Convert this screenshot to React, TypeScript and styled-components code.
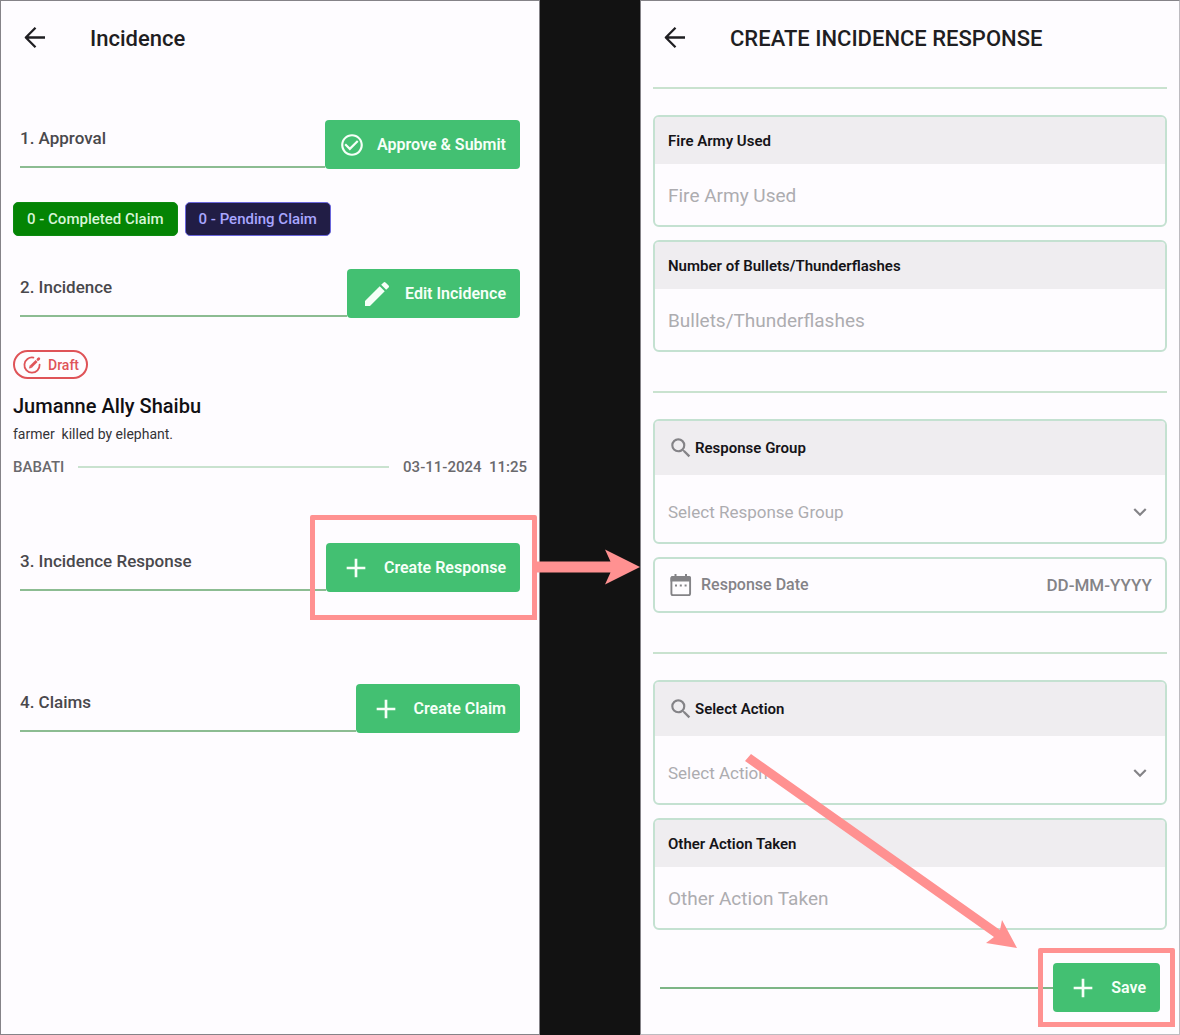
import React from "react";
import styled, { createGlobalStyle } from "styled-components";
import {
  MdAdd,
  MdCheckCircleOutline,
  MdEdit,
  MdExpandMore,
  MdSearch,
} from "react-icons/md";

const color = {
  surface: "#fefcff",
  backdrop: "#121212",
  frame: "#858388",
  green: "#43c072",
  rule: "#8cbc92",
  softRule: "#c9e2cf",
  fieldBorder: "#c4e1d1",
  fieldHead: "#efedf0",
  ink: "#1f1e22",
  label: "#49484c",
  muted: "#6a696d",
  faint: "#848387",
  placeholder: "#adacb0",
  red: "#df5358",
  marker: "#ff9191",
};

const GlobalStyle = createGlobalStyle`
  *, *::before, *::after { box-sizing: border-box; }
  body {
    margin: 0;
    background: ${color.backdrop};
    font-family: Roboto, "Liberation Sans", sans-serif;
  }
  button, input, select { font-family: inherit; }
`;

const Page = styled.div`
  display: grid;
  grid-template-columns: minmax(0, 1fr) 100px minmax(0, 1fr);
  min-height: 100vh;
`;

const Screen = styled.main`
  display: flex;
  flex-direction: column;
  background: ${color.surface};
  border: 1px solid ${color.frame};
`;

const LeftScreen = styled(Screen)`
  grid-column: 1;
`;

const RightScreen = styled(Screen)`
  grid-column: 3;
  border-right-color: #bdbbc0;
  border-bottom-color: #bdbbc0;
`;

const AppBar = styled.header`
  display: flex;
  align-items: center;
  gap: 40px;
  height: 74px;
  padding: 0 19px;
`;

const BackButton = styled.button`
  display: flex;
  padding: 0;
  border: 0;
  background: none;
  color: ${color.ink};
`;

const Title = styled.h1`
  margin: 0;
  padding-top: 2px;
  font-size: 22px;
  line-height: 28px;
  font-weight: 500;
  color: ${color.ink};
`;

const Step = styled.section`
  display: flex;
  height: 49px;
  margin: 0 19px;

  & + & {
    margin-top: 92px;
  }
`;

const StepLabel = styled.h2`
  flex: 1;
  margin: 0 0 1px;
  padding-top: 8px;
  border-bottom: 2px solid ${color.rule};
  font-size: 17px;
  line-height: 20px;
  font-weight: 500;
  color: ${color.label};
`;

const ActionButton = styled.button`
  position: relative;
  display: flex;
  align-items: center;
  gap: 12px;
  height: 49px;
  padding: 0 14px;
  border: 0;
  border-radius: 4px;
  background: ${color.green};
  color: #f6fff8;
  font-size: 16px;
  line-height: 20px;
  font-weight: 600;
  white-space: nowrap;
`;

const Marker = styled.span<{ $inset: string }>`
  position: absolute;
  inset: ${(p) => p.$inset};
  border: 5px solid ${color.marker};
  border-radius: 2px 2px 0 0;
  pointer-events: none;
`;

const MarkerArrow = styled.svg<{ $left: string; $bottom: string }>`
  position: absolute;
  left: ${(p) => p.$left};
  bottom: ${(p) => p.$bottom};
  fill: ${color.marker};
  pointer-events: none;
  z-index: 1;
`;

const Steps = styled.div`
  display: flex;
  flex-direction: column;
  padding-top: 45px;
`;

const Chips = styled.div`
  display: flex;
  gap: 7px;
  padding: 33px 12px;
`;

const Chip = styled.span<{ $tone: "done" | "pending" }>`
  padding: 6px 13px;
  border: 1px solid ${(p) => (p.$tone === "done" ? "#0c8a10" : "#6a66dc")};
  border-radius: 5px;
  background: ${(p) => (p.$tone === "done" ? "#048404" : "#211d45")};
  color: ${(p) => (p.$tone === "done" ? "#d8f5d8" : "#a9a6ff")};
  font-size: 15px;
  line-height: 20px;
  font-weight: 500;
`;

const Incident = styled.article`
  display: flex;
  flex-direction: column;
  align-items: flex-start;
  padding: 32px 12px 66px;
`;

const DraftBadge = styled.span`
  display: flex;
  align-items: center;
  gap: 6px;
  height: 29px;
  padding: 0 7px;
  border: 2px solid ${color.red};
  border-radius: 15px;
  color: ${color.red};
  font-size: 14px;
  line-height: 20px;
  font-weight: 500;
`;

const Person = styled.h3`
  margin: 13px 0 0;
  font-size: 20px;
  line-height: 28px;
  font-weight: 500;
  color: #111014;
`;

const Summary = styled.p`
  margin: 4px 0 0;
  font-size: 14px;
  line-height: 20px;
  color: #343337;
  white-space: pre-wrap;
`;

const Meta = styled.div`
  display: flex;
  align-items: center;
  gap: 14px;
  width: 100%;
  margin-top: 13px;
  font-size: 15px;
  line-height: 20px;
  font-weight: 500;
  color: ${color.muted};
  white-space: pre;
`;

const MetaRule = styled.hr`
  flex: 1;
  margin: 0;
  border: 0;
  border-top: 2px solid ${color.softRule};
`;

const Form = styled.form`
  display: flex;
  flex-direction: column;
  padding: 12px 12px 0;
`;

const Group = styled.section`
  display: flex;
  flex-direction: column;
  gap: 13px;
  padding: 26px 0 39px;
  border-top: 2px solid ${color.softRule};

  &:last-of-type {
    padding-bottom: 33px;
  }
`;

const Field = styled.div`
  display: flex;
  flex-direction: column;
  overflow: hidden;
  border: 2px solid ${color.fieldBorder};
  border-radius: 6px;
`;

const FieldLabel = styled.label<{ $tall?: boolean }>`
  display: flex;
  align-items: center;
  gap: 1px;
  height: ${(p) => (p.$tall ? 54 : 47)}px;
  padding: 0 13px;
  background: ${color.fieldHead};
  font-size: 15px;
  line-height: 20px;
  font-weight: 600;
  color: #151418;

  svg {
    color: ${color.faint};
  }
`;

const TextInput = styled.input`
  height: 61px;
  padding: 2px 13px 0;
  border: 0;
  outline: 0;
  background: transparent;
  font-size: 19px;
  color: ${color.ink};

  &::placeholder {
    color: ${color.placeholder};
    opacity: 1;
  }
`;

const SelectBox = styled.div`
  display: grid;
  align-items: center;
  height: 67px;
  padding-top: 6px;

  > * {
    grid-area: 1 / 1;
  }

  svg {
    justify-self: end;
    margin-right: 12px;
    color: ${color.faint};
    pointer-events: none;
  }
`;

const Select = styled.select`
  appearance: none;
  width: 100%;
  height: 60px;
  padding: 0 13px;
  border: 0;
  outline: 0;
  background: transparent;
  font-size: 17px;
  color: ${color.placeholder};
`;

const DateField = styled.div`
  display: flex;
  align-items: center;
  gap: 7px;
  height: 56px;
  padding: 0 13px;
  border: 2px solid ${color.fieldBorder};
  border-radius: 6px;
  color: ${color.faint};
`;

const DateLabel = styled.label`
  font-size: 16px;
  line-height: 20px;
  font-weight: 500;
`;

const DateInput = styled.input`
  flex: 1;
  min-width: 0;
  padding: 0;
  border: 0;
  outline: 0;
  background: transparent;
  text-align: right;
  font-size: 17px;
  font-weight: 500;
  color: ${color.faint};

  &::placeholder {
    color: ${color.faint};
    opacity: 1;
  }
`;

const SaveRow = styled.div`
  display: flex;
  align-items: center;
  padding: 0 7px 22px;
`;

const SaveRule = styled.hr`
  flex: 1;
  margin: 0;
  border: 0;
  border-top: 2px solid #7db586;
`;

const BackIcon = () => (
  <svg width="30" height="30" viewBox="0 0 30 30" fill="none" stroke="currentColor" strokeWidth="2.3" aria-hidden="true">
    <path d="M25 14.5H6M15.5 4.8L5.8 14.5l9.7 9.7" strokeLinejoin="round" />
  </svg>
);

const DraftIcon = () => (
  <svg width="20" height="20" viewBox="0 0 20 20" fill="none" stroke="currentColor" aria-hidden="true">
    <path d="M11.400 2.600A7.600 7.600 0 1 0 17.600 9.600" strokeWidth="1.800" strokeLinecap="round" />
    <path d="M9 11.500L14.600 6" strokeWidth="2.800" />
    <path d="M16 4.600L16.800 3.800" strokeWidth="2.800" strokeLinecap="round" />
    <path d="M7.300 13.200l.7-2.600 1.900 1.900z" fill="currentColor" strokeWidth=".5" />
  </svg>
);

const CalendarIcon = () => (
  <svg width="26" height="26" viewBox="0 0 26 26" fill="none" stroke="currentColor" aria-hidden="true">
    <rect x="3.400" y="4.900" width="18.700" height="18.200" rx="1.600" strokeWidth="1.900" />
    <path d="M2.500 9.500V6Q2.500 4 4.500 4h16.500Q23 4 23 6V9.500z" fill="currentColor" stroke="none" />
    <path d="M7.500 2V6M18 2V6" strokeWidth="2" />
    <path d="M7 13.500h2M11.800 13.500h2M16.600 13.500h2" strokeWidth="2" />
  </svg>
);

const TextField = ({ id, label, placeholder }: { id: string; label: string; placeholder: string }) => (
  <Field>
    <FieldLabel htmlFor={id}>{label}</FieldLabel>
    <TextInput id={id} type="text" placeholder={placeholder} />
  </Field>
);

const SelectField = ({ id, label, placeholder }: { id: string; label: string; placeholder: string }) => (
  <Field>
    <FieldLabel htmlFor={id} $tall>
      <MdSearch size={26} aria-hidden="true" />
      {label}
    </FieldLabel>
    <SelectBox>
      <Select id={id} defaultValue="">
        <option value="">{placeholder}</option>
      </Select>
      <MdExpandMore size={26} aria-hidden="true" />
    </SelectBox>
  </Field>
);

export default function App() {
  return (
    <>
      <GlobalStyle />
      <Page>
        <LeftScreen>
          <AppBar>
            <BackButton type="button" aria-label="Back">
              <BackIcon />
            </BackButton>
            <Title>Incidence</Title>
          </AppBar>
          <Steps>
            <Step>
              <StepLabel>1. Approval</StepLabel>
              <ActionButton type="button">
                <MdCheckCircleOutline size={26} aria-hidden="true" />
                Approve &amp; Submit
              </ActionButton>
            </Step>
            <Chips>
              <Chip $tone="done">0 - Completed Claim</Chip>
              <Chip $tone="pending">0 - Pending Claim</Chip>
            </Chips>
            <Step>
              <StepLabel>2. Incidence</StepLabel>
              <ActionButton type="button">
                <MdEdit size={32} aria-hidden="true" />
                Edit Incidence
              </ActionButton>
            </Step>
            <Incident>
              <DraftBadge>
                <DraftIcon />
                Draft
              </DraftBadge>
              <Person>Jumanne Ally Shaibu</Person>
              <Summary>{"farmer  killed by elephant."}</Summary>
              <Meta>
                <span>BABATI</span>
                <MetaRule />
                <time dateTime="2024-11-03T11:25">{"03-11-2024  11:25"}</time>
              </Meta>
            </Incident>
            <Step>
              <StepLabel>3. Incidence Response</StepLabel>
              <ActionButton type="button">
                <MdAdd size={32} aria-hidden="true" />
                Create Response
                <Marker $inset="-28px -17px -28px -16px" />
                <MarkerArrow $left="calc(100% + 16px)" $bottom="7px" width="104" height="36" viewBox="0 0 104 36" aria-hidden="true">
                  <path d="M0 12.500H74.500L69 0.500L104 18L69 35.500L74.500 23.500H0z" />
                </MarkerArrow>
              </ActionButton>
            </Step>
            <Step>
              <StepLabel>4. Claims</StepLabel>
              <ActionButton type="button">
                <MdAdd size={32} aria-hidden="true" />
                Create Claim
              </ActionButton>
            </Step>
          </Steps>
        </LeftScreen>

        <RightScreen>
          <AppBar>
            <BackButton type="button" aria-label="Back">
              <BackIcon />
            </BackButton>
            <Title>CREATE INCIDENCE RESPONSE</Title>
          </AppBar>
          <Form>
            <Group>
              <TextField id="fire-army" label="Fire Army Used" placeholder="Fire Army Used" />
              <TextField id="bullets" label="Number of Bullets/Thunderflashes" placeholder="Bullets/Thunderflashes" />
            </Group>
            <Group>
              <SelectField id="group" label="Response Group" placeholder="Select Response Group" />
              <DateField>
                <CalendarIcon />
                <DateLabel htmlFor="date">Response Date</DateLabel>
                <DateInput id="date" type="text" placeholder="DD-MM-YYYY" />
              </DateField>
            </Group>
            <Group>
              <SelectField id="action" label="Select Action" placeholder="Select Action" />
              <TextField id="other-action" label="Other Action Taken" placeholder="Other Action Taken" />
            </Group>
            <SaveRow>
              <SaveRule />
              <ActionButton type="button">
                <MdAdd size={32} aria-hidden="true" />
                Save
                <Marker $inset="-15px" />
                <MarkerArrow $left="-308px" $bottom="63px" width="273" height="196" viewBox="0 0 273 196" aria-hidden="true">
                  <path d="M6 1L255 177L257 167L272 195L241 190L249 184L0 8z" />
                </MarkerArrow>
              </ActionButton>
            </SaveRow>
          </Form>
        </RightScreen>
      </Page>
    </>
  );
}
